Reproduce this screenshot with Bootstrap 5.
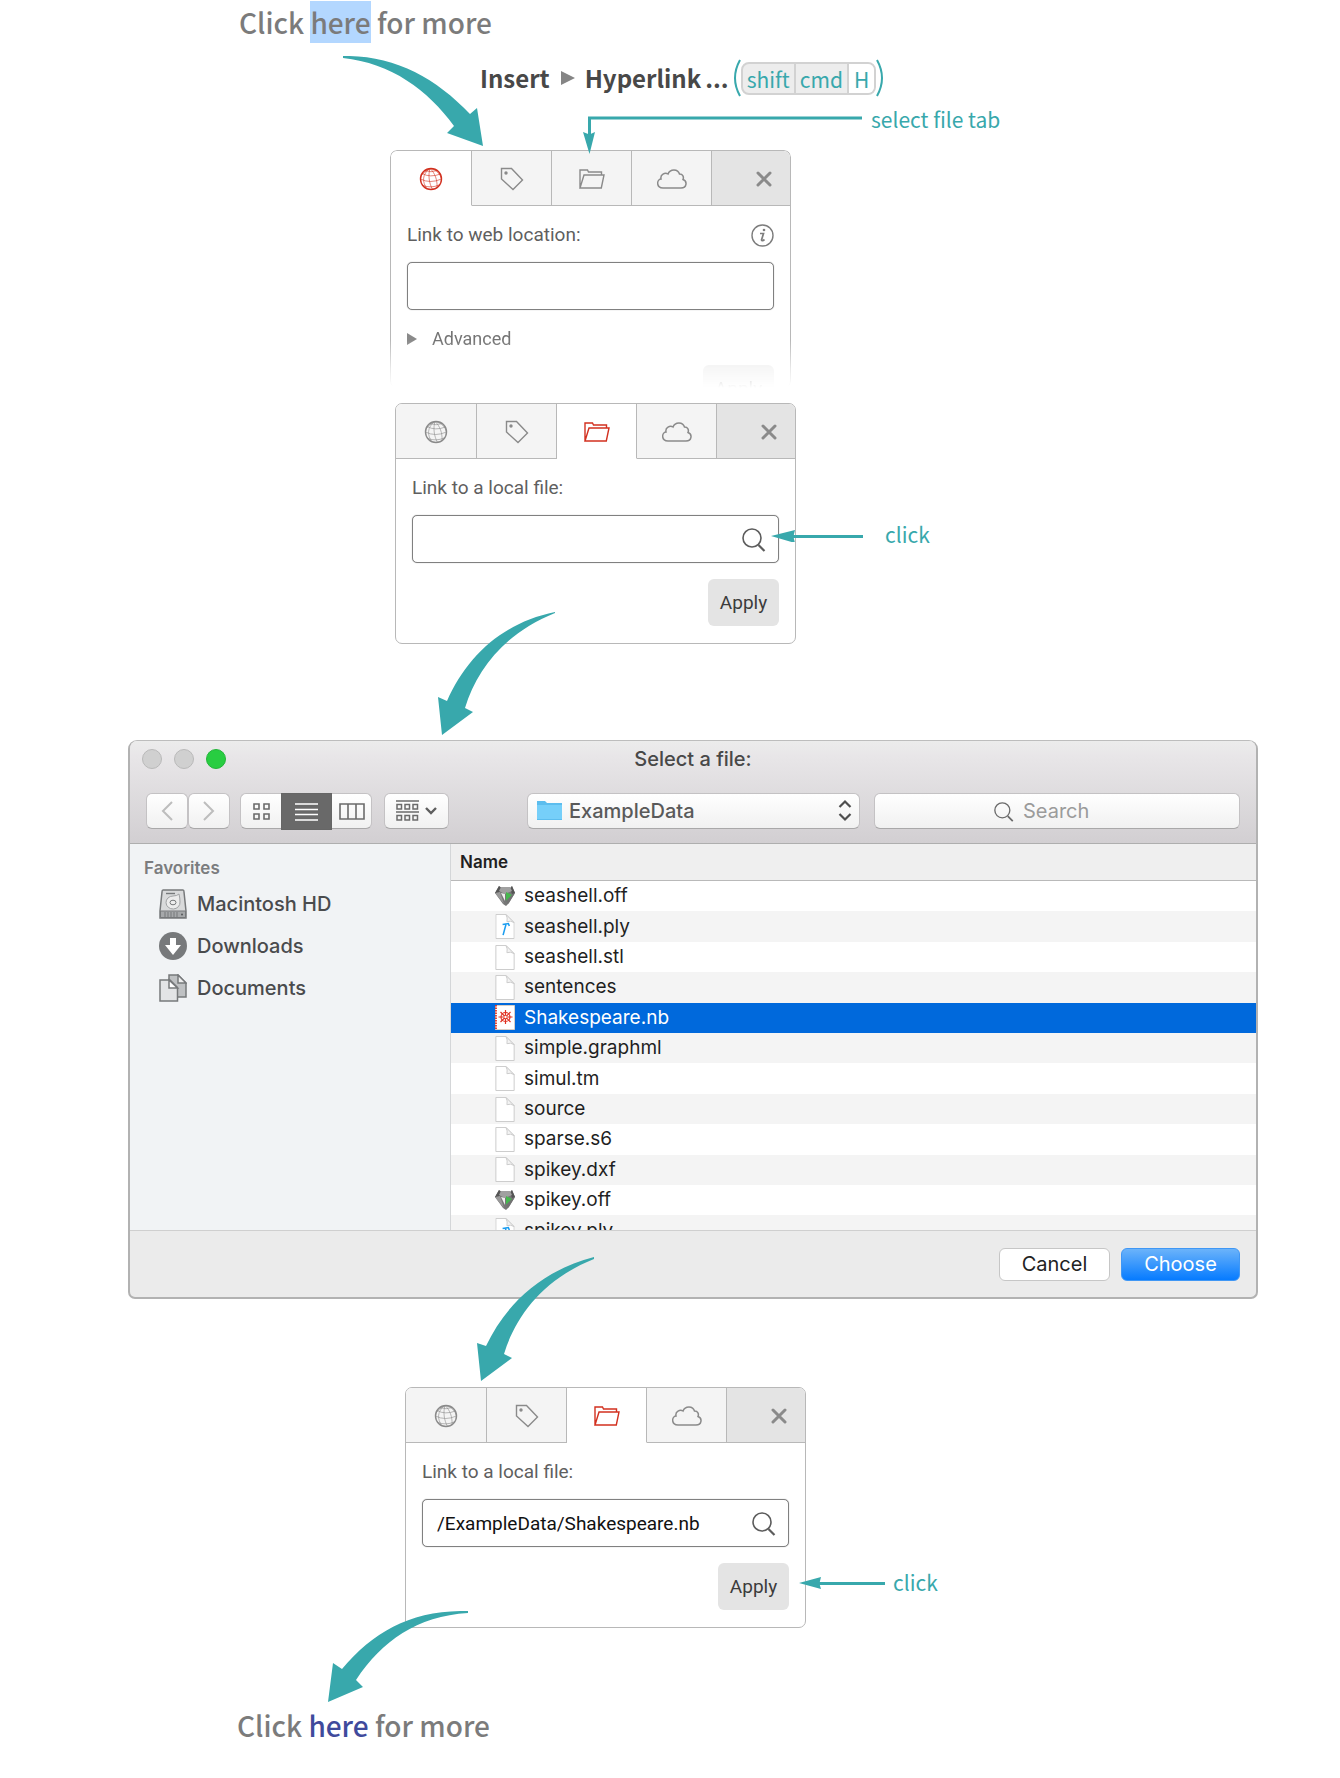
<!DOCTYPE html>
<html lang="en">
<head>
<meta charset="utf-8">
<meta name="viewport" content="width=device-width, initial-scale=1">
<title>Inserting a hyperlink to a file</title>
<link href="https://cdn.jsdelivr.net/npm/bootstrap@5.3.0/dist/css/bootstrap.min.css" rel="stylesheet">
<style>
:root{--teal:#38a8ac;--rule:#b8b8b8;--source:"Noto Sans CJK SC","Noto Sans",sans-serif;--mac:Inter,Roboto,sans-serif}
body{background:#fff;font-family:Roboto,sans-serif;color:#666}
svg{display:block;flex:none}
.guide{max-width:1340px;padding-bottom:34px}
.sentence{font:500 28px/42px var(--source);color:#7b7b7b;padding:1px 0 0 239px;margin:0}
.sentence.final{padding:76px 0 0 237px}
.sentence a{color:#3f4a9c;text-decoration:none}
.picked{background:#b3d7ff;display:inline-block}
.menu-path{padding:10px 0 0 480px;height:60px;font:700 24px/48px var(--source);color:#484848}
.keys{border:2px solid #d2d2d2;border-radius:8px;background:#ededed;height:33px;overflow:hidden}
.keys kbd{all:unset;font:400 21px/31px var(--source);color:var(--teal);padding:0 4px;border-right:2px solid #d2d2d2}
.keys kbd:last-child{background:#fff;border:0;padding:0 5px}
.note{font:400 21px/30px var(--source);color:var(--teal)}
.file-tab-note{padding-left:582px;gap:8px;height:47px;padding-top:1px}
.file-tab-note svg{position:relative;z-index:2}
.panel{width:401px;border:1px solid var(--rule);border-radius:7px;background:#fff;position:relative}
.panel-web{margin-left:390px;height:238px;-webkit-mask-image:linear-gradient(#000 80%,rgba(0,0,0,.3) 92%,transparent 100%);mask-image:linear-gradient(#000 80%,rgba(0,0,0,.3) 92%,transparent 100%);border-bottom:0;overflow:hidden}
.row-local{padding:15px 0 0 395px}
.row-result{padding:88px 0 0 405px}
.tabs{height:55px}
.tabs button{width:80px;border:0;border-right:1px solid var(--rule);border-bottom:1px solid var(--rule);background:#f4f4f4;color:#8a8a8a;padding:2px 0 0;display:flex;align-items:center;justify-content:center}
.tabs button:first-child{width:81px;border-top-left-radius:6px}
.tabs button[aria-selected=true]{background:#fff;color:#d2301f;border-bottom-color:#fff}
.tabs button.closer{flex:1;width:auto;background:#e4e4e4;border-right:0;border-top-right-radius:6px;justify-content:flex-end;padding-right:18px}
.panel-body{padding:14px 16px 17px}
.panel-body label{font-size:19px;line-height:30px;color:#5f5f5f}
.panel-body input{height:48px;border:1px solid #808080;border-radius:5px;font:400 19px/24px Roboto,sans-serif;color:#111;padding:0 50px 0 14px;margin-top:12px;box-shadow:0 0 1px #999}
.finder{position:relative}
.finder button{position:absolute;right:9px;top:21px;border:0;background:none;padding:4px;color:#5c5c5c}
.apply{background:#e4e4e4;border:0;border-radius:6px;width:71px;height:47px;font-size:19px;color:#3c3c3c;padding:1px 0 0;margin-top:16px}
.advanced{border:0;background:none;padding:0;font-size:18px;line-height:24px;color:#747474;gap:15px;margin-top:17px}
.panel-web .apply{margin-top:14px}
.click-note{gap:21px;margin-top:116px}
.click-note svg{margin-left:-25px;position:relative;z-index:2}
.click-note.near{gap:8px;margin-top:180px}
.click-note.near svg{margin-left:-7px}
.flow-arrow{position:absolute;z-index:3;color:var(--teal);pointer-events:none}
.a-one{left:343px;top:56px}.a-two{left:437px;top:611px}.a-three{left:476px;top:1257px}.a-four{left:327px;top:1611px}

.dialog-window{margin:96px 82px 0 128px;border:2px solid #b2b2b2;border-top:1px solid #bdbdbd;border-radius:9px 9px 7px 7px;overflow:hidden;font-family:var(--mac);background:#ebebeb}
.chrome{background:linear-gradient(#ececec 0,#e8e6e8 15%,#d2cfd2 100%);border-bottom:1px solid #aeaeae;height:103px;padding:8px 16px 0 16px}
.lights{gap:12px;margin-left:-4px}
.light{width:20px;height:20px;border-radius:50%;background:#d0d0d0;border:1px solid #b9b9b9}
.light.green{background:#28cd41;border-color:#23b539}
.window-title{font-size:20px;line-height:24px;font-weight:500;color:#484848}
.toolbar{margin-top:24px;height:37px}
.toolbar button,.toolbar select,.toolbar input{height:36px;border:1px solid #c4c2c4;border-bottom-color:#a9a8a9;border-radius:6px;background:linear-gradient(#fff,#f1f1f1);color:#6b6b6b;padding:0;display:flex;align-items:center;justify-content:center;font:400 20px/24px var(--mac)}
.toolbar .step{width:42px}
.toolbar .grouping{width:65px;margin-left:12px;gap:6px}
.toolbar button.on{background:#696969;border-color:#666;color:#fff;border-radius:0;height:37px;width:51px}
.views{margin-left:10px}
.views button:first-child{width:41px;border-radius:6px 0 0 6px;border-right:0}
.views button:last-child{width:40px;border-radius:0 6px 6px 0;border-left:0}
.place{width:333px;position:relative;margin-left:78px}
.toolbar .place select{width:100%;appearance:none;font-weight:500;color:#5a5a5a;padding-left:41px}
.place svg,.lookup svg{position:absolute;pointer-events:none}
.place svg:first-of-type{left:10px;top:7px}
.place svg:last-of-type{right:8px;top:6px}
.lookup{position:relative;flex:1;margin-left:14px}
.lookup svg{left:calc(50% - 63px);top:9px;color:#6b6b6b}
.toolbar .lookup input{width:100%;padding-left:calc(50% - 35px);color:#444}
.lookup input::placeholder{color:#9b9b9b;opacity:1}
.browser{height:386px}
.sidebar{width:321px;background:#f1f3f5;border-right:1px solid #d4d6d8;padding:12px 14px}
.sidebar h2{font-size:17px;line-height:24px;font-weight:600;color:#7b7c7e;margin:0}
.sidebar a{display:flex;align-items:center;gap:10px;height:42px;padding-left:15px;color:#4a4b4d;text-decoration:none;font-size:20px;font-weight:500}
.sidebar ul{padding-top:3px}
.listing{overflow:hidden;background:#fff}
.files{width:100%;height:402px;border-collapse:separate;border-spacing:0;color:#1f1f1f}
.files th{background:#efefef;height:37px;border-bottom:1px solid #b9b9b9;font-size:17px;line-height:24px;font-weight:600;padding:0 9px}
.files tbody{font-size:19px;line-height:22px}
.files td{padding:0 0 0 44px}
.files tr:nth-child(even) td{background:#f4f4f4}
.files tr.chosen td{background:#0069dc;color:#fff}
.file-name{display:flex;align-items:center;gap:9px;height:28px}
.dialog-foot{border-top:1px solid #cfcfcf;height:67px;gap:11px;padding-right:16px}
.dialog-foot button{height:33px;border-radius:6px;font-size:20px;line-height:24px;border:1px solid #c6c6c6;background:#fff;color:#222;width:111px;padding:0}
.dialog-foot button.go{width:119px;color:#fff;background:linear-gradient(#6bb3fa,#067bff);border-color:#3f97f5}
</style>
<script src="https://cdn.jsdelivr.net/npm/bootstrap@5.3.0/dist/js/bootstrap.bundle.min.js"></script>
</head>
<body>
<svg width="0" height="0" class="position-absolute" aria-hidden="true">
<defs>
<symbol id="globe" viewBox="0 0 24 24"><g fill="none" stroke="currentColor"><circle cx="12" cy="12" r="10.500" stroke-width="1.400"/><g stroke-width=".6"><path d="M3 6.500Q11 11 21.500 7M1.500 12Q11 17 22.500 12M4 18.500Q12 21.500 20 18M6 3.500Q12 6 18 3.500M11 1.500C3 7 3 15 8 22M11 1.500C9 8 10 16 13.500 22.500M11 1.500C16 6 18.500 13 18 20.500M11 1.500C7 4 4 6 2 9M11 1.500C18 3 21 7 22.500 12"/></g></g></symbol>
<symbol id="tag" viewBox="0 0 24 24"><path d="M1.500 1.500H11.500L22.500 13 13 22.500 1.500 12Z" fill="none" stroke="currentColor" stroke-width="1.400"/><circle cx="6" cy="6" r="1.700" fill="currentColor"/></symbol>
<symbol id="folder" viewBox="0 0 26 20"><path d="M1 19V1H8.500L9.500 3H22.500V6M1 19L5 6H25L22.300 19Z" fill="none" stroke="currentColor" stroke-width="1.400"/></symbol>
<symbol id="cloud" viewBox="0 0 30 20"><path d="M6 19C-1 19-.5 10.500 4 10 3 5.500 8 3 11 5 13-.5 21-.5 22.500 5 26 5 27 8 26 10.500 30.500 12 30 19 24 19Z" fill="none" stroke="currentColor" stroke-width="1.500"/></symbol>
<symbol id="cross" viewBox="0 0 16 16"><path d="M2 2 14 14M14 2 2 14" stroke="currentColor" stroke-width="3" stroke-linecap="round"/></symbol>
<symbol id="lens" viewBox="0 0 24 24"><circle cx="10" cy="10" r="9" fill="none" stroke="currentColor" stroke-width="1.600"/><path d="M16.500 17 22.500 23" stroke="currentColor" stroke-width="2.200"/></symbol>
<symbol id="page" viewBox="0 0 20 26"><path d="M.5.5H11L19.500 9V25.500H.5Z" fill="#fff" stroke="#cbcbcb"/><path d="M11 .5Q13 4 12 8Q16 6.500 19.500 9Z" fill="#f3f3f3" stroke="#cbcbcb"/></symbol>
<symbol id="ply" viewBox="0 0 20 26"><use href="#page"/><path d="M7.500 11 13.500 10 14.500 12.500M11 11 8 22" fill="none" stroke="#1b9df0" stroke-width="1.600"/></symbol>
<symbol id="gem" viewBox="0 0 20 20"><path d="M4 0 0 7 8 18 11 20 14 17 20 7 17 0 15 2H7Z" fill="#777"/><path d="M4 0 7 3 3 8 0 7ZM17 0 15 3 17 8 20 7Z" fill="#555"/><path d="M6 1H15L17 5 10 8 4 5Z" fill="#a0a0a0"/><path d="M0 7 5 6 9 18Z" fill="#999"/><path d="M6 7 10 8V15Z" fill="#efefef"/><path d="M11 6 17 9 11 15Z" fill="#45b84e"/><path d="M17 9 20 7 13 18 11 15Z" fill="#727272"/></symbol>
<symbol id="notebook" viewBox="0 0 20 25"><path d="M.5.500H19.500V24.500H.5Z" fill="#fff" stroke="#d8cfc6"/><path d="M1 0V25" stroke="#dd1100" stroke-width="1.500" stroke-dasharray="1.500 1"/><g stroke="#e03020" stroke-width="1.200" fill="none"><path d="M10.500 5V19M3.500 12H17.500M5.500 7 15.500 17M15.500 7 5.500 17"/><circle cx="10.500" cy="12" r="4.500"/></g><circle cx="10.500" cy="12" r="1.200" fill="#fff"/></symbol>
</defs>
</svg>

<main class="guide position-relative">
  <p class="sentence">Click <span class="picked">here</span> for more</p>

  <div class="menu-path d-flex align-items-center">
    <span>Insert</span>
    <svg class="mx-2" width="19" height="14" viewBox="0 0 19 14"><path d="M3 0 17 7 3 14Z" fill="#858585"/></svg>
    <span>Hyperlink</span><span class="ms-1">...</span>
    <svg class="ms-1" width="8" height="38" viewBox="0 0 8 38"><path d="M7 1Q-3 19 7 37" fill="none" stroke="#38a8ac" stroke-width="2"/></svg>
    <span class="keys d-flex"><kbd>shift</kbd><kbd>cmd</kbd><kbd>H</kbd></span>
    <svg width="8" height="38" viewBox="0 0 8 38"><path d="M1 1Q11 19 1 37" fill="none" stroke="#38a8ac" stroke-width="2"/></svg>
  </div>

  <div class="file-tab-note note d-flex">
    <svg class="mt-2" width="281" height="42" viewBox="0 0 281 42"><path d="M280 6H7.500V26" fill="none" stroke="#38a8ac" stroke-width="3"/><path d="M1 20 7.500 22.500 13 20 7.500 42Z" fill="#38a8ac"/></svg>
    <span>select file tab</span>
  </div>

  <section class="panel panel-web" aria-label="Web link">
    <div class="tabs d-flex" role="tablist">
      <button role="tab" aria-selected="true" aria-label="Web"><svg width="24" height="24"><use href="#globe"/></svg></button>
      <button role="tab" aria-label="Tag"><svg width="24" height="24"><use href="#tag"/></svg></button>
      <button role="tab" aria-label="File"><svg width="26" height="20"><use href="#folder"/></svg></button>
      <button role="tab" aria-label="Cloud"><svg width="30" height="20"><use href="#cloud"/></svg></button>
      <button class="closer" aria-label="Close"><svg width="16" height="16"><use href="#cross"/></svg></button>
    </div>
    <div class="panel-body">
      <div class="d-flex justify-content-between align-items-center">
        <label for="web">Link to web location:</label>
        <svg width="23" height="23" viewBox="0 0 23 23" fill="none" stroke="#7d7d7d"><circle cx="11.500" cy="11.500" r="10.500" stroke-width="1.400"/><path d="M9 9.500H12.500L10.500 16Q11 17.500 13.500 15.500" stroke-width="1.700"/><circle cx="13" cy="6" r="1.300" fill="#7d7d7d" stroke="none"/></svg>
      </div>
      <input id="web" type="text" class="w-100">
      <button class="advanced d-flex align-items-center"><svg width="10" height="12" viewBox="0 0 10 12"><path d="M0 0 10 6 0 12Z" fill="#8a8a8a"/></svg>Advanced</button>
      <div class="text-end"><button class="apply">Apply</button></div>
    </div>
  </section>

  <div class="row-local d-flex align-items-start">
    <section class="panel" aria-label="Local file">
      <div class="tabs d-flex" role="tablist">
        <button role="tab" aria-label="Web"><svg width="24" height="24"><use href="#globe"/></svg></button>
        <button role="tab" aria-label="Tag"><svg width="24" height="24"><use href="#tag"/></svg></button>
        <button role="tab" aria-selected="true" aria-label="File"><svg width="26" height="20"><use href="#folder"/></svg></button>
        <button role="tab" aria-label="Cloud"><svg width="30" height="20"><use href="#cloud"/></svg></button>
        <button class="closer" aria-label="Close"><svg width="16" height="16"><use href="#cross"/></svg></button>
      </div>
      <div class="panel-body">
        <label for="local">Link to a local file:</label>
        <div class="finder"><input id="local" type="text" class="w-100"><button aria-label="Browse"><svg width="24" height="24"><use href="#lens"/></svg></button></div>
        <div class="text-end"><button class="apply">Apply</button></div>
      </div>
    </section>
    <div class="click-note note d-flex align-items-center"><svg width="93" height="16" viewBox="0 0 93 16"><path d="M0 10 24 4 22.500 10V11L24 17Z" fill="#38a8ac"/><path d="M22 10.500H92" stroke="#38a8ac" stroke-width="3"/></svg><span>click</span></div>
  </div>

  <section class="dialog-window" aria-label="Select a file">
    <header class="chrome">
      <div class="d-flex align-items-center position-relative">
        <div class="lights d-flex"><span class="light"></span><span class="light"></span><span class="light green"></span></div>
        <div class="window-title position-absolute start-50 translate-middle-x">Select a file:</div>
      </div>
      <div class="toolbar d-flex align-items-start">
        <button class="step" aria-label="Back"><svg width="12" height="20" viewBox="0 0 12 20"><path d="M11 1 2 10 11 19" fill="none" stroke="#bdbdbd" stroke-width="2"/></svg></button>
        <button class="step" aria-label="Forward"><svg width="12" height="20" viewBox="0 0 12 20"><path d="M1 1 10 10 1 19" fill="none" stroke="#bdbdbd" stroke-width="2"/></svg></button>
        <div class="views d-flex">
          <button aria-label="Icons"><svg width="17" height="17" viewBox="0 0 17 17" fill="none" stroke="currentColor" stroke-width="1.600"><path d="M1 1H6V6H1ZM11 1H16V6H11ZM1 11H6V16H1ZM11 11H16V16H11Z"/></svg></button>
          <button class="on" aria-label="List"><svg width="23" height="18" viewBox="0 0 23 18"><path d="M0 1H23M0 6.500H23M0 11.500H23M0 17H23" stroke="#fff" stroke-width="1.600"/></svg></button>
          <button aria-label="Columns"><svg width="26" height="17" viewBox="0 0 26 17"><path d="M1 1H25V16H1ZM9 1V16M17 1V16" fill="none" stroke="currentColor" stroke-width="1.600"/></svg></button>
        </div>
        <button class="grouping" aria-label="Group by"><svg width="23" height="22" viewBox="0 0 23 22" fill="none" stroke="currentColor" stroke-width="1.500"><path d="M0 1H23M0 12H23M1 4.500H5.500V9H1ZM9 4.500H13.500V9H9ZM17 4.500H21.500V9H17ZM1 15.500H5.500V20H1ZM9 15.500H13.500V20H9ZM17 15.500H21.500V20H17Z"/></svg><svg width="12" height="8" viewBox="0 0 12 8"><path d="M1 1 6 6 11 1" fill="none" stroke="#5e5e5e" stroke-width="2.400"/></svg></button>
        <div class="place">
          <select aria-label="Folder"><option>ExampleData</option></select>
          <svg width="25" height="20" viewBox="0 0 25 20"><path d="M0 1H8L10 3H25V20H0Z" fill="#5cbdee"/><path d="M0 5H25V19H0Z" fill="#76cff9"/></svg>
          <svg width="14" height="23" viewBox="0 0 14 23"><path d="M1.500 8 7 2.500 12.500 8M1.500 15 7 20.500 12.500 15" fill="none" stroke="#4f4f4f" stroke-width="2.200"/></svg>
        </div>
        <div class="lookup"><input type="search" placeholder="Search" aria-label="Search"><svg width="20" height="20"><use href="#lens"/></svg></div>
      </div>
    </header>
    <div class="browser d-flex">
      <nav class="sidebar flex-shrink-0">
        <h2>Favorites</h2>
        <ul class="list-unstyled m-0">
          <li><a href="#"><svg width="28" height="30" viewBox="0 0 28 30"><path d="M4 1H24Q25 1 25 3L27 22V29H1V22L3 3Q3 1 4 1Z" fill="#d9dadb" stroke="#77797b" stroke-width="1.500"/><path d="M1.500 22H26.500V28.500H1.500Z" fill="#a6a8aa" stroke="#77797b"/><path d="M6 23V28M9 23V28M12 23V28M15 23V28M18 23V28" stroke="#77797b"/><circle cx="23" cy="25.500" r="1" fill="#55575a"/><path d="M20 5Q21 9 21 13A7 6.500 0 1 1 14 7Q18 7 20 5Z" fill="#ececec" stroke="#a0a2a4"/><ellipse cx="14" cy="13.500" rx="3" ry="2.300" fill="#eee" stroke="#77797b"/><path d="M7 4.500H16" stroke="#77797b" stroke-width="1.400"/></svg>Macintosh HD</a></li>
          <li><a href="#"><svg width="28" height="28" viewBox="0 0 28 28"><circle cx="14" cy="14" r="14" fill="#77797b"/><path d="M11 6H17V13H22L14 23 6 13H11Z" fill="#fff"/></svg>Downloads</a></li>
          <li><a href="#"><svg width="28" height="28" viewBox="0 0 28 28" stroke="#77797b" stroke-width="1.500"><path d="M10 1H19L27 9V23H10Z" fill="#bfc1c3"/><path d="M19 1V9H27Z" fill="#eee"/><path d="M1 6H11L18.500 13.500V27H1Z" fill="#e3e4e6"/><path d="M10 6V14H18.500Z" fill="#fff"/></svg>Documents</a></li>
        </ul>
      </nav>
      <div class="listing flex-fill">
        <table class="files">
          <thead><tr><th scope="col">Name</th></tr></thead>
          <tbody>
            <tr><td><span class="file-name"><svg width="20" height="20"><use href="#gem"/></svg>seashell.off</span></td></tr>
            <tr><td><span class="file-name"><svg width="20" height="25"><use href="#ply"/></svg>seashell.ply</span></td></tr>
            <tr><td><span class="file-name"><svg width="20" height="25"><use href="#page"/></svg>seashell.stl</span></td></tr>
            <tr><td><span class="file-name"><svg width="20" height="25"><use href="#page"/></svg>sentences</span></td></tr>
            <tr class="chosen"><td><span class="file-name"><svg width="20" height="25"><use href="#notebook"/></svg>Shakespeare.nb</span></td></tr>
            <tr><td><span class="file-name"><svg width="20" height="25"><use href="#page"/></svg>simple.graphml</span></td></tr>
            <tr><td><span class="file-name"><svg width="20" height="25"><use href="#page"/></svg>simul.tm</span></td></tr>
            <tr><td><span class="file-name"><svg width="20" height="25"><use href="#page"/></svg>source</span></td></tr>
            <tr><td><span class="file-name"><svg width="20" height="25"><use href="#page"/></svg>sparse.s6</span></td></tr>
            <tr><td><span class="file-name"><svg width="20" height="25"><use href="#page"/></svg>spikey.dxf</span></td></tr>
            <tr><td><span class="file-name"><svg width="20" height="20"><use href="#gem"/></svg>spikey.off</span></td></tr>
            <tr><td><span class="file-name"><svg width="20" height="25"><use href="#ply"/></svg>spikey.ply</span></td></tr>
          </tbody>
        </table>
      </div>
    </div>
    <footer class="dialog-foot d-flex align-items-center justify-content-end">
      <button>Cancel</button><button class="go">Choose</button>
    </footer>
  </section>

  <div class="row-result d-flex align-items-start">
    <section class="panel" aria-label="Chosen file">
      <div class="tabs d-flex" role="tablist">
        <button role="tab" aria-label="Web"><svg width="24" height="24"><use href="#globe"/></svg></button>
        <button role="tab" aria-label="Tag"><svg width="24" height="24"><use href="#tag"/></svg></button>
        <button role="tab" aria-selected="true" aria-label="File"><svg width="26" height="20"><use href="#folder"/></svg></button>
        <button role="tab" aria-label="Cloud"><svg width="30" height="20"><use href="#cloud"/></svg></button>
        <button class="closer" aria-label="Close"><svg width="16" height="16"><use href="#cross"/></svg></button>
      </div>
      <div class="panel-body">
        <label for="result">Link to a local file:</label>
        <div class="finder"><input id="result" type="text" class="w-100" value="/ExampleData/Shakespeare.nb"><button aria-label="Browse"><svg width="24" height="24"><use href="#lens"/></svg></button></div>
        <div class="text-end"><button class="apply">Apply</button></div>
      </div>
    </section>
    <div class="click-note near note d-flex align-items-center"><svg width="86" height="16" viewBox="0 0 86 16"><path d="M0 9 22 3 20.500 9V10L22 15Z" fill="#38a8ac"/><path d="M20 9.500H86" stroke="#38a8ac" stroke-width="3"/></svg><span>click</span></div>
  </div>

  <p class="sentence final">Click <a href="#">here</a> for more</p>

  <svg class="flow-arrow a-one" width="141" height="91" viewBox="0 0 141 91"><path d="M0 0C50-1 92 21 127 58L134 52 140 90 104 77 111 70C85 34 48 7 0 2Z" fill="currentColor"/></svg>
  <svg class="flow-arrow a-two" width="119" height="125" viewBox="0 0 119 125"><path d="M118 1C65 12 30 45 10 90L1 86 5 124 36 101 28 97C40 58 68 22 118 2Z" fill="currentColor"/></svg>
  <svg class="flow-arrow a-three" width="119" height="125" viewBox="0 0 119 125"><path d="M118 0C65 14 30 47 10 89L1 86 5 124 36 101 28 97C40 58 68 22 118 2Z" fill="currentColor"/></svg>
  <svg class="flow-arrow a-four" width="142" height="92" viewBox="0 0 142 92"><path d="M141 0C85-1 47 20 15 58L6 52 1 91 36 76 29 69C55 30 90 5 141 2Z" fill="currentColor"/></svg>
</main>
</body>
</html>
